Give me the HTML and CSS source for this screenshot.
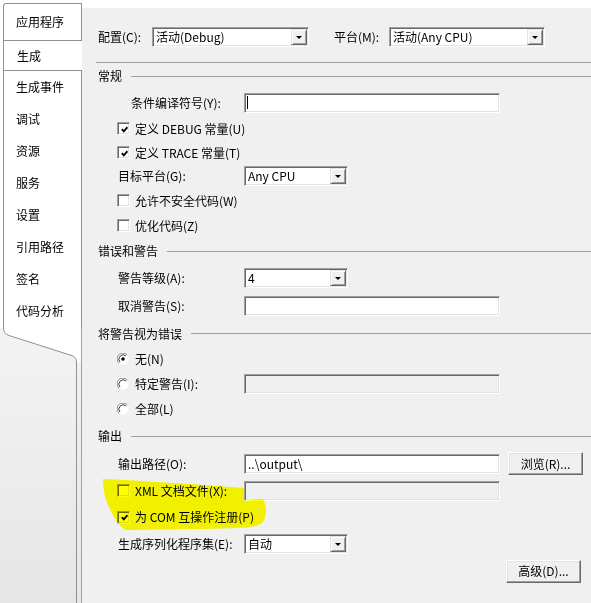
FILE: index.html
```html
<!DOCTYPE html>
<html lang="zh-CN">
<head>
  <meta charset="UTF-8">
  <title>生成</title>
  <link rel="stylesheet" href="styles.css">
</head>
<body>

  <div class="window">

    <!-- left tab strip -->
    <nav class="side">
      <div class="tablist">
        <div class="tab tab-first">应用程序</div>
        <div class="tab tab-active">生成</div>
        <div class="tab">生成事件</div>
        <div class="tab">调试</div>
        <div class="tab">资源</div>
        <div class="tab">服务</div>
        <div class="tab">设置</div>
        <div class="tab">引用路径</div>
        <div class="tab">签名</div>
        <div class="tab">代码分析</div>
      </div>
      <svg class="side-end" width="82" height="276" viewBox="0 0 82 276">
        <defs>
          <linearGradient id="sideFade" x1="0" y1="0" x2="0" y2="1">
            <stop offset="0" stop-color="#f3f3f3"/>
            <stop offset="1" stop-color="#e6e6e6"/>
          </linearGradient>
        </defs>
        <rect x="0" y="0" width="81" height="276" fill="url(#sideFade)"/>
        <path d="M0,0 H81 V35 H76 Q76,29 70,28 L9,9 Q3,7 3,1 L0,1 Z" fill="#fff"/>
        <path d="M3.5,0 V1 Q3.5,6.5 9,8.5 L70,28 Q76.5,29.5 76.5,35 V276" fill="none" stroke="#8f9090"/>
        <line x1="81.5" y1="0" x2="81.5" y2="276" stroke="#a0a0a0"/>
      </svg>
    </nav>

    <main class="content">
      <div class="topbar">
        <span class="top-label">配置(C):</span>
        <div class="select sel-config"><span class="sel-value">活动(Debug)</span><span class="sel-btn"></span></div>
        <span class="top-label top-label-2">平台(M):</span>
        <div class="select sel-platform"><span class="sel-value">活动(Any CPU)</span><span class="sel-btn"></span></div>
      </div>

      <div class="heading r26">常规</div>
      <div class="row r27">
        <span class="field-label field-label-indent">条件编译符号(Y):</span>
        <div class="textbox wide"><span class="caret"></span></div>
      </div>
      <div class="row row-check r25">
        <span class="checkbox"><svg viewBox="0 0 7 7"><polyline points="0.8,3.2 2.8,5.4 6.4,1.2"/></svg></span>定义 DEBUG 常量(U)
      </div>
      <div class="row row-check r23">
        <span class="checkbox"><svg viewBox="0 0 7 7"><polyline points="0.8,3.2 2.8,5.4 6.4,1.2"/></svg></span>定义 TRACE 常量(T)
      </div>
      <div class="row r24">
        <span class="field-label">目标平台(G):</span>
        <div class="select narrow"><span class="sel-value">Any CPU</span><span class="sel-btn"></span></div>
      </div>
      <div class="row row-check r25">
        <span class="checkbox"></span>允许不安全代码(W)
      </div>
      <div class="row row-check r25">
        <span class="checkbox"></span>优化代码(Z)
      </div>

      <div class="heading r26">错误和警告</div>
      <div class="row r27">
        <span class="field-label">警告等级(A):</span>
        <div class="select narrow"><span class="sel-value">4</span><span class="sel-btn"></span></div>
      </div>
      <div class="row r29">
        <span class="field-label">取消警告(S):</span>
        <div class="textbox wide"></div>
      </div>

      <div class="heading r27">将警告视为错误</div>
      <div class="row row-check r24">
        <svg class="radio" viewBox="0 0 12 12">
          <circle cx="6" cy="6" r="5.5" fill="#fff"/>
          <path d="M10.2,1.8 A5.6,5.6 0 0 0 1.8,10.2" fill="none" stroke="#8a8a8a"/>
          <path d="M9.1,2.9 A4.4,4.4 0 0 0 2.9,9.1" fill="none" stroke="#3c3c3c"/>
          <circle cx="6" cy="6" r="1.8" fill="#000"/>
        </svg>无(N)
      </div>
      <div class="row row-check r25">
        <span class="option-wrap">
          <svg class="radio" viewBox="0 0 12 12">
            <circle cx="6" cy="6" r="5.5" fill="#fff"/>
            <path d="M10.2,1.8 A5.6,5.6 0 0 0 1.8,10.2" fill="none" stroke="#8a8a8a"/>
            <path d="M9.1,2.9 A4.4,4.4 0 0 0 2.9,9.1" fill="none" stroke="#3c3c3c"/>
          </svg>特定警告(I):
        </span>
        <div class="textbox wide disabled"></div>
      </div>
      <div class="row row-check r26">
        <svg class="radio" viewBox="0 0 12 12">
          <circle cx="6" cy="6" r="5.5" fill="#fff"/>
          <path d="M10.2,1.8 A5.6,5.6 0 0 0 1.8,10.2" fill="none" stroke="#8a8a8a"/>
          <path d="M9.1,2.9 A4.4,4.4 0 0 0 2.9,9.1" fill="none" stroke="#3c3c3c"/>
        </svg>全部(L)
      </div>

      <div class="heading r28">输出</div>
      <div class="row r27">
        <span class="field-label">输出路径(O):</span>
        <div class="textbox wide"><span class="tb-value">..\output\</span></div>
        <button class="btn btn-browse">浏览(R)...</button>
      </div>
      <div class="row row-check r27">
        <span class="option-wrap"><span class="checkbox"></span>XML 文档文件(X):</span>
        <div class="textbox wide disabled"></div>
      </div>
      <div class="row row-check r26">
        <span class="checkbox"><svg viewBox="0 0 7 7"><polyline points="0.8,3.2 2.8,5.4 6.4,1.2"/></svg></span>为 COM 互操作注册(P)
      </div>
      <div class="row r28">
        <span class="field-label">生成序列化程序集(E):</span>
        <div class="select narrow"><span class="sel-value">自动</span><span class="sel-btn"></span></div>
      </div>
      <div class="row row-end r26">
        <button class="btn">高级(D)...</button>
      </div>
    </main>

    <!-- highlighter stroke drawn over the screenshot -->
    <svg class="marker" width="591" height="603" viewBox="0 0 591 603">
      <path d="M103,479 C150,481 200,485 244,488 L244,501 L263,499 C267,506 267,518 262,523 C256,528 238,528 200,529 L126,530 C118,526 113,516 109,507 C105,498 103,490 103,479 Z" fill="#ffff00"/>
    </svg>
  </div>

</body>
</html>
```

FILE: styles.css
```css
* {
  box-sizing: border-box;
}

body {
  margin: 0;
  background: #fff;
  font-family: "Noto Sans CJK SC", "Liberation Sans", sans-serif;
  font-size: 12px;
  line-height: 16px;
  color: #000;
}

.window {
  position: relative;
  display: flex;
  width: 591px;
  height: 603px;
  overflow: hidden;
}

/* ---- tabs ---- */
.side {
  width: 82px;
  flex-shrink: 0;
  display: flex;
  flex-direction: column;
  background: #fff;
}

.tablist {
  margin: 3px 0 0 3px;
  width: 79px;
  border: 1px solid #8f9090;
  border-bottom: none;
  border-top-left-radius: 3px;
  background: #fff;
}

.tab {
  height: 32px;
  padding-left: 12px;
  display: flex;
  align-items: center;
}

.tab-first {
  height: 37px;
  border-bottom: 1px solid #8f9090;
}

.tab-active {
  height: 30px;
  margin: 0 -1px 0 -1px;
  padding-left: 13px;
  border-left: 1px solid #8f9090;
  border-bottom: 1px solid #8f9090;
  border-bottom-left-radius: 2px;
  background: #fff;
}

.side-end {
  display: block;
}

/* ---- main panel ---- */
.content {
  flex: 1;
  margin-top: 8px;
  padding-left: 16px;
  background: #f0f0f0;
}

.topbar {
  height: 55px;
  margin-left: -2px;
  padding: 19px 0 0 2px;
  display: flex;
  align-items: flex-start;
  border-bottom: 1px solid #a0a0a0;
}

.top-label {
  width: 54px;
  line-height: 20px;
}

.top-label-2 {
  width: 55px;
  margin-left: 25px;
}

.heading {
  display: flex;
  align-items: center;
}

.heading::after {
  content: "";
  flex: 1;
  height: 1px;
  margin-left: 9px;
  background: #a0a0a0;
}

.row {
  display: flex;
  align-items: center;
  padding-left: 20px;
}

.row-check {
  padding-left: 19px;
}

.row-end {
  justify-content: flex-end;
  padding-right: 10px;
}

.r23 { height: 23px; }
.r24 { height: 24px; }
.r25 { height: 25px; }
.r26 { height: 26px; }
.r27 { height: 27px; }
.r28 { height: 28px; }
.r29 { height: 29px; }

.field-label {
  width: 126px;
}

.field-label-indent {
  padding-left: 13px;
}

.option-wrap {
  width: 127px;
  display: flex;
  align-items: center;
}

/* ---- classic controls ---- */
.textbox,
.select {
  height: 20px;
  border: 1px solid;
  border-color: #a0a0a0 #fff #fff #a0a0a0;
  box-shadow: inset 1px 1px #696969, inset -1px -1px #e3e3e3;
  background: #fff;
  display: flex;
  align-items: center;
}

.textbox.disabled {
  background: #f0f0f0;
}

.wide {
  width: 256px;
}

.narrow {
  width: 104px;
}

.sel-config {
  width: 157px;
}

.sel-platform {
  width: 156px;
}

.caret {
  width: 1px;
  height: 13px;
  margin-left: 2px;
  background: #000;
}

.tb-value,
.sel-value {
  padding-left: 3px;
  white-space: nowrap;
}

.sel-btn {
  margin: 0 1px 0 auto;
  width: 16px;
  height: 16px;
  border: 1px solid;
  border-color: #e3e3e3 #696969 #696969 #e3e3e3;
  box-shadow: inset 1px 1px #fff, inset -1px -1px #a0a0a0;
  background: #f0f0f0;
  display: flex;
  align-items: center;
  justify-content: center;
}

.sel-btn::before {
  content: "";
  width: 0;
  height: 0;
  margin-top: 1px;
  border-top: 3px solid #000;
  border-left: 3.5px solid transparent;
  border-right: 3.5px solid transparent;
}

.checkbox {
  width: 13px;
  height: 13px;
  margin-right: 5px;
  flex-shrink: 0;
  border: 1px solid;
  border-color: #a0a0a0 #fff #fff #a0a0a0;
  box-shadow: inset 1px 1px #696969, inset -1px -1px #e3e3e3;
  background: #fff;
  display: flex;
  align-items: center;
  justify-content: center;
}

.checkbox svg {
  width: 7px;
  height: 7px;
  margin: 1px 0 0 1px;
}

.checkbox polyline {
  fill: none;
  stroke: #000;
  stroke-width: 1.8;
}

.radio {
  width: 12px;
  height: 12px;
  margin-right: 6px;
  flex-shrink: 0;
}

.btn {
  width: 75px;
  height: 23px;
  margin-left: 8px;
  padding: 0;
  font: inherit;
  color: #000;
  background: #f0f0f0;
  border: 1px solid;
  border-color: #fff #696969 #696969 #fff;
  box-shadow: inset -1px -1px #a0a0a0, inset 1px 1px #e3e3e3;
}

.marker {
  position: absolute;
  top: 0;
  left: 0;
  pointer-events: none;
  mix-blend-mode: multiply;
}
```
